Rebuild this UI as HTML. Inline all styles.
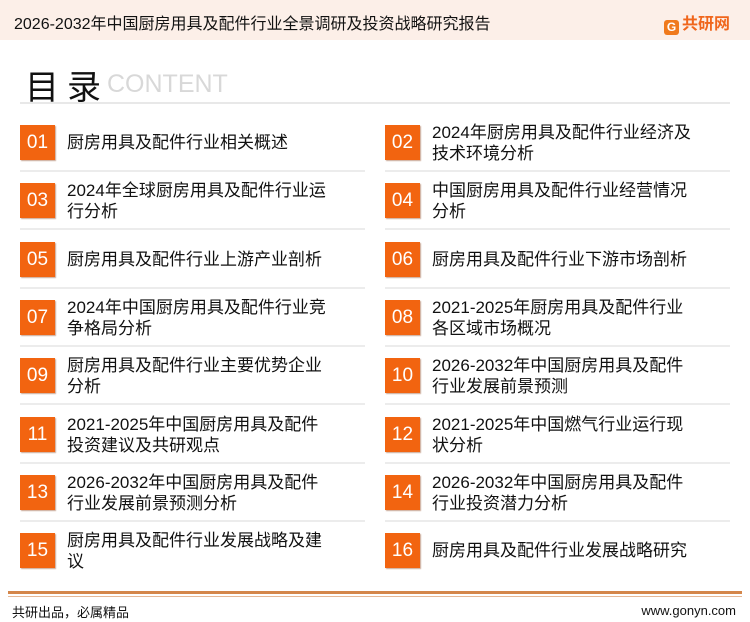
<!DOCTYPE html><html><head><meta charset="utf-8"><style>
body{margin:0;width:750px;height:622px;position:relative;background:#fff;font-family:"Liberation Sans","Noto Sans CJK SC",sans-serif;overflow:hidden}
.hd{position:absolute;left:0;top:0;width:750px;height:40px;background:#fcefe8}
.hd .t{position:absolute;left:14px;top:10px;font-size:16px;color:#111}
.logo{position:absolute;left:664px;top:10px;font-size:16px;font-weight:bold;color:#f0661c}
.g{display:inline-block;width:15px;height:15px;background:#f07a1c;border-radius:3px;vertical-align:-2px;margin-right:3px;color:#fff;font-size:12px;line-height:15px;text-align:center}
.ti{position:absolute;left:25px;top:60px;font-size:34px;color:#111;letter-spacing:8px}
.ct{position:absolute;left:107px;top:70px;font-size:25px;color:#d8d8d8}
.dv{position:absolute;left:20px;top:102px;width:710px;height:2px;background:#e8e8e8}
.it{position:absolute;height:35px}
.n{position:absolute;left:0;top:0;width:35px;height:35px;background:#f26410;color:#fff;font-size:19px;line-height:35px;text-align:center;box-shadow:1px 1px 1px #c9a896}
.x{position:absolute;left:47px;font-size:17px;line-height:21px;color:#111;white-space:nowrap}
.ln{position:absolute;height:2px;width:345px;background:#ececec}
.f1{position:absolute;left:8px;top:591px;width:734px;height:3px;background:#d4864a}
.f2{position:absolute;left:8px;top:596px;width:734px;height:1px;background:#e6b896}
.fl{position:absolute;left:12px;top:602px;font-size:13px;color:#111}
.fr{position:absolute;right:14px;top:603px;font-size:13px;color:#111}
</style></head><body>
<div class="hd"><div class="t">2026-2032年中国厨房用具及配件行业全景调研及投资战略研究报告</div><div class="logo"><span class="g">G</span>共研网</div></div>
<div class="ti">目录</div><div class="ct">CONTENT</div>
<div class="dv"></div>

<div class="it" style="left:20px;top:125px"><div class="n">01</div><div class="x" style="top:7px">厨房用具及配件行业相关概述</div></div>
<div class="it" style="left:385px;top:125px"><div class="n">02</div><div class="x" style="top:-3px">2024年厨房用具及配件行业经济及<br>技术环境分析</div></div>
<div class="ln" style="left:20px;top:170px"></div><div class="ln" style="left:385px;top:170px"></div>

<div class="it" style="left:20px;top:183px"><div class="n">03</div><div class="x" style="top:-3px">2024年全球厨房用具及配件行业运<br>行分析</div></div>
<div class="it" style="left:385px;top:183px"><div class="n">04</div><div class="x" style="top:-3px">中国厨房用具及配件行业经营情况<br>分析</div></div>
<div class="ln" style="left:20px;top:228px"></div><div class="ln" style="left:385px;top:228px"></div>

<div class="it" style="left:20px;top:242px"><div class="n">05</div><div class="x" style="top:7px">厨房用具及配件行业上游产业剖析</div></div>
<div class="it" style="left:385px;top:242px"><div class="n">06</div><div class="x" style="top:7px">厨房用具及配件行业下游市场剖析</div></div>
<div class="ln" style="left:20px;top:287px"></div><div class="ln" style="left:385px;top:287px"></div>

<div class="it" style="left:20px;top:300px"><div class="n">07</div><div class="x" style="top:-3px">2024年中国厨房用具及配件行业竞<br>争格局分析</div></div>
<div class="it" style="left:385px;top:300px"><div class="n">08</div><div class="x" style="top:-3px">2021-2025年厨房用具及配件行业<br>各区域市场概况</div></div>
<div class="ln" style="left:20px;top:345px"></div><div class="ln" style="left:385px;top:345px"></div>

<div class="it" style="left:20px;top:358px"><div class="n">09</div><div class="x" style="top:-3px">厨房用具及配件行业主要优势企业<br>分析</div></div>
<div class="it" style="left:385px;top:358px"><div class="n">10</div><div class="x" style="top:-3px">2026-2032年中国厨房用具及配件<br>行业发展前景预测</div></div>
<div class="ln" style="left:20px;top:403px"></div><div class="ln" style="left:385px;top:403px"></div>

<div class="it" style="left:20px;top:417px"><div class="n">11</div><div class="x" style="top:-3px">2021-2025年中国厨房用具及配件<br>投资建议及共研观点</div></div>
<div class="it" style="left:385px;top:417px"><div class="n">12</div><div class="x" style="top:-3px">2021-2025年中国燃气行业运行现<br>状分析</div></div>
<div class="ln" style="left:20px;top:462px"></div><div class="ln" style="left:385px;top:462px"></div>

<div class="it" style="left:20px;top:475px"><div class="n">13</div><div class="x" style="top:-3px">2026-2032年中国厨房用具及配件<br>行业发展前景预测分析</div></div>
<div class="it" style="left:385px;top:475px"><div class="n">14</div><div class="x" style="top:-3px">2026-2032年中国厨房用具及配件<br>行业投资潜力分析</div></div>
<div class="ln" style="left:20px;top:520px"></div><div class="ln" style="left:385px;top:520px"></div>

<div class="it" style="left:20px;top:533px"><div class="n">15</div><div class="x" style="top:-3px">厨房用具及配件行业发展战略及建<br>议</div></div>
<div class="it" style="left:385px;top:533px"><div class="n">16</div><div class="x" style="top:7px">厨房用具及配件行业发展战略研究</div></div>

<div class="f1"></div><div class="f2"></div>
<div class="fl">共研出品，必属精品</div><div class="fr">www.gonyn.com</div>
</body></html>
